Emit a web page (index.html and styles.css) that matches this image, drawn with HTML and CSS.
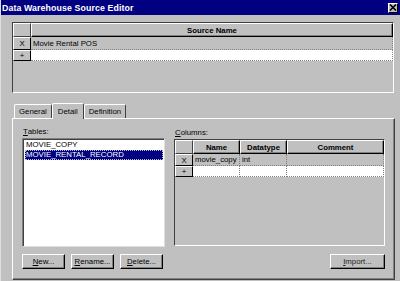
FILE: index.html
```html
<!DOCTYPE html>
<html lang="en">
<head>
    <meta charset="UTF-8">
    <meta name="viewport" content="width=device-width, initial-scale=1.0">
    <title>Data Warehouse Source Editor</title>
    <link rel="stylesheet" href="styles.css">
</head>
<body>
    <div class="window">
        <div class="titlebar">
            <span class="title">Data Warehouse Source Editor</span>
            <button class="close">
                <svg width="8" height="7" viewBox="0 0 8 7"><path d="M1 0.5 L7 6.5 M7 0.5 L1 6.5" stroke="#000" stroke-width="1.6"/></svg>
            </button>
        </div>

        <div class="grid source-grid">
            <div class="grid-row head-row">
                <div class="sel"></div>
                <div class="head wide">Source Name</div>
            </div>
            <div class="grid-row data-row">
                <div class="sel">X</div>
                <div class="cell wide">Movie Rental POS</div>
            </div>
            <div class="grid-row new-row">
                <div class="sel">+</div>
                <div class="cell wide"></div>
            </div>
        </div>

        <div class="tabs">
            <div class="tab">General</div>
            <div class="tab active">Detail</div>
            <div class="tab">Definition</div>
        </div>

        <div class="panel">
            <div class="col left-col">
                <div class="label"><u>T</u>ables:</div>
                <div class="listbox">
                    <div class="item">MOVIE_COPY</div>
                    <div class="item selected">MOVIE_RENTAL_RECORD</div>
                </div>
                <div class="buttons">
                    <button class="btn"><u>N</u>ew...</button>
                    <button class="btn"><u>R</u>ename...</button>
                    <button class="btn"><u>D</u>elete...</button>
                </div>
            </div>
            <div class="col right-col">
                <div class="label"><u>C</u>olumns:</div>
                <div class="grid columns-grid">
                    <div class="grid-row head-row">
                        <div class="sel"></div>
                        <div class="head c-name">Name</div>
                        <div class="head c-type">Datatype</div>
                        <div class="head c-comment">Comment</div>
                    </div>
                    <div class="grid-row data-row">
                        <div class="sel">X</div>
                        <div class="cell c-name">movie_copy</div>
                        <div class="cell c-type">int</div>
                        <div class="cell c-comment"></div>
                    </div>
                    <div class="grid-row new-row">
                        <div class="sel">+</div>
                        <div class="cell c-name"></div>
                        <div class="cell c-type"></div>
                        <div class="cell c-comment"></div>
                    </div>
                </div>
                <div class="buttons right">
                    <button class="btn import"><u>I</u>mport...</button>
                </div>
            </div>
        </div>
    </div>
</body>
</html>
```

FILE: styles.css
```css
* {
    box-sizing: border-box;
}

body {
    margin: 0;
    font-family: "Liberation Sans", Arial, sans-serif;
    font-size: 7.8px;
    color: #000;
}

.window {
    width: 400px;
    height: 281px;
    background-color: #c0c0c0;
    border-left: 1px solid #dfdfdf;
    display: flex;
    flex-direction: column;
    overflow: hidden;
}

.titlebar {
    height: 15px;
    background-color: #000080;
    color: #fff;
    display: flex;
    align-items: center;
    justify-content: space-between;
    padding: 0 2px 0 1px;
}

.title {
    font-weight: bold;
    font-size: 8.8px;
    letter-spacing: 0.1px;
}

.close {
    width: 10px;
    height: 10px;
    padding: 0;
    margin: 0;
    background-color: #c0c0c0;
    border: 1px solid;
    border-color: #fff #000 #000 #fff;
    display: flex;
    align-items: center;
    justify-content: center;
}

/* grids */
.grid {
    background-color: #c0c0c0;
    border: 1px solid;
    border-color: #404040 #fff #fff #404040;
    display: flex;
    flex-direction: column;
}

.source-grid {
    margin: 7px 0 0 11px;
    width: 382px;
    height: 71px;
}

.grid-row {
    display: flex;
}

.source-grid .head-row {
    height: 14px;
}

.source-grid .data-row {
    height: 13px;
}

.source-grid .new-row {
    height: 11px;
}

.sel {
    width: 18px;
    flex-shrink: 0;
    border: 1px solid;
    border-color: #fff #000 #000 #fff;
    display: flex;
    align-items: center;
    justify-content: center;
}

.head-row .sel {
    border-color: #fff #404040 #404040 #fff;
}

.head {
    border: 1px solid;
    border-color: #fff #000 #000 #fff;
    box-shadow: inset -1px -1px #808080;
    font-weight: bold;
    display: flex;
    align-items: center;
    justify-content: center;
}

.cell {
    border-right: 1px dotted #808080;
    border-bottom: 1px dotted #808080;
    padding-left: 2px;
    display: flex;
    align-items: center;
    white-space: nowrap;
}

.new-row .cell {
    background-color: #fff;
}

.wide {
    width: 362px;
}

/* tabs */
.tabs {
    margin: 9px 0 0 13px;
    height: 16px;
    display: flex;
    align-items: flex-end;
}

.tab {
    height: 14px;
    padding: 0 4px;
    border: 1px solid;
    border-bottom: none;
    border-color: #fff #404040 #404040 #fff;
    border-radius: 2px 2px 0 0;
    display: flex;
    align-items: center;
}

.tab.active {
    height: 16px;
    margin-bottom: -1px;
    position: relative;
    z-index: 1;
    background-color: #c0c0c0;
    padding: 0 5px;
}

.panel {
    margin-left: 11px;
    width: 383px;
    height: 162px;
    border: 1px solid;
    border-color: #fff #404040 #404040 #fff;
    box-shadow: inset -1px -1px #808080;
    padding: 6px 9px 0 9px;
    display: flex;
    gap: 9px;
}

.col {
    display: flex;
    flex-direction: column;
}

.left-col {
    width: 143px;
}

.right-col {
    width: 211px;
}

.label {
    height: 13px;
    padding-left: 1px;
    display: flex;
    align-items: center;
}

.right-col .label {
    height: 14px;
}

.listbox {
    height: 109px;
    background-color: #fff;
    border: 1px solid;
    border-color: #808080 #dfdfdf #dfdfdf #808080;
    box-shadow: inset 1px 1px #404040;
    padding: 1px 1px 0 2px;
}

.item {
    height: 10px;
    line-height: 10px;
    padding-left: 1px;
}

.item.selected {
    background-color: #000080;
    color: #fff;
    outline: 1px dotted #c0c0c0;
    outline-offset: -1px;
}

.columns-grid {
    height: 107px;
}

.columns-grid .head-row {
    height: 14px;
}

.columns-grid .data-row {
    height: 12px;
}

.columns-grid .new-row {
    height: 11px;
}

.c-name {
    width: 47px;
}

.c-type {
    width: 47px;
}

.c-comment {
    width: 97px;
}

.buttons {
    margin-top: 7px;
    display: flex;
    gap: 6px;
}

.right-col .buttons {
    margin-top: 8px;
}

.buttons.right {
    justify-content: flex-end;
}

.btn {
    width: 43px;
    height: 15px;
    padding: 0;
    margin: 0;
    font-family: "Liberation Sans", Arial, sans-serif;
    font-size: 7.8px;
    color: #000;
    background-color: #c0c0c0;
    border: 1px solid;
    border-color: #fff #000 #000 #fff;
    box-shadow: inset -1px -1px #808080;
}

.btn.import {
    width: 55px;
    color: #202020;
}
```
